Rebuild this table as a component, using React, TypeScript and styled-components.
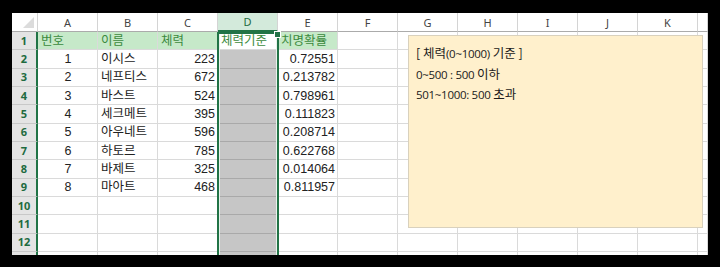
import styled, { createGlobalStyle } from 'styled-components';

const GlobalStyle = createGlobalStyle`
  html, body {
    margin: 0;
    padding: 0;
    background: #000;
  }
  body {
    font-family: "Noto Sans", "Noto Sans CJK KR", sans-serif;
  }
`;

const COLUMNS = ['A', 'B', 'C', 'D', 'E', 'F', 'G', 'H', 'I', 'J', 'K', ''];
const ROW_COUNT = 13;
const VISIBLE_ROWS = 12;

type Row = { no: string; name: string; hp: string; base: string; crit: string };

const HEAD: Row = { no: '번호', name: '이름', hp: '체력', base: '체력기준', crit: '치명확률' };

const DATA: Row[] = [
  { no: '1', name: '이시스', hp: '223', base: '', crit: '0.72551' },
  { no: '2', name: '네프티스', hp: '672', base: '', crit: '0.213782' },
  { no: '3', name: '바스트', hp: '524', base: '', crit: '0.798961' },
  { no: '4', name: '세크메트', hp: '395', base: '', crit: '0.111823' },
  { no: '5', name: '아우네트', hp: '596', base: '', crit: '0.208714' },
  { no: '6', name: '하토르', hp: '785', base: '', crit: '0.622768' },
  { no: '7', name: '바제트', hp: '325', base: '', crit: '0.014064' },
  { no: '8', name: '마아트', hp: '468', base: '', crit: '0.811957' },
];

type CellProps = {
  $align?: 'left' | 'right' | 'center';
  $variant?: 'plain' | 'title' | 'active' | 'selected';
};

const App = () => {
  const renderRow = (index: number) => {
    const rowNum = index + 1;
    const isHead = index === 0;
    const row = isHead ? HEAD : DATA[index - 1];

    return COLUMNS.map((col, c) => {
      const key = `${rowNum}-${c}`;
      let text = '';
      let align: CellProps['$align'] = 'left';
      let variant: CellProps['$variant'] = 'plain';

      if (col === 'D') variant = index === 0 ? 'active' : 'selected';
      else if (isHead && c < 5) variant = 'title';

      if (row) {
        if (col === 'A') {
          text = row.no;
          align = isHead ? 'left' : 'center';
        }
        if (col === 'B') text = row.name;
        if (col === 'C') {
          text = row.hp;
          align = isHead ? 'left' : 'right';
        }
        if (col === 'D') text = row.base;
        if (col === 'E') {
          text = row.crit;
          align = isHead ? 'left' : 'right';
        }
      }

      return (
        <Cell key={key} $align={align} $variant={variant}>
          {text}
        </Cell>
      );
    });
  };

  return (
    <>
      <GlobalStyle />
      <Frame>
        <Sheet>
          <Grid>
            <Corner />
            {COLUMNS.map((col, i) => (
              <ColHeader key={`h-${i}`} $active={col === 'D'}>
                {col}
              </ColHeader>
            ))}
            {Array.from({ length: ROW_COUNT }).map((_, i) => (
              <RowFragment key={`r-${i}`}>
                <RowHeader>{i < VISIBLE_ROWS ? i + 1 : ''}</RowHeader>
                {renderRow(i)}
              </RowFragment>
            ))}
          </Grid>

          <Selection>
            <FillHandle />
          </Selection>

          <Note>
            <NoteLine>
              [ 체력<Latin>(0~1000)</Latin> 기준 ]
            </NoteLine>
            <NoteLine>
              <Latin>0~500 : 500</Latin> 이하
            </NoteLine>
            <NoteLine>
              <Latin>501~1000: 500</Latin> 초과
            </NoteLine>
          </Note>
        </Sheet>
      </Frame>
    </>
  );
};

export default App;

const Frame = styled.div`
  width: 720px;
  height: 267px;
  padding: 13px 12px 0 12px;
  box-sizing: border-box;
  background: #000;
`;

const Sheet = styled.div`
  position: relative;
  width: 696px;
  height: 242px;
  overflow: hidden;
  background: #fff;
`;

const Grid = styled.div`
  display: grid;
  grid-template-columns: 26px repeat(11, 60px) 10px;
  grid-template-rows: 19px repeat(13, 18.33px);
`;

const RowFragment = styled.div`
  display: contents;
`;

const Corner = styled.div`
  position: relative;
  background: #fff;
  border-right: 1px solid #d4d4d4;
  border-bottom: 1px solid #ababab;
  box-sizing: border-box;

  &::after {
    content: '';
    position: absolute;
    right: 3px;
    bottom: 3px;
    width: 0;
    height: 0;
    border-left: 11px solid transparent;
    border-bottom: 11px solid #dcdcdc;
  }
`;

const ColHeader = styled.div<{ $active: boolean }>`
  display: flex;
  align-items: center;
  justify-content: center;
  box-sizing: border-box;
  border-right: 1px solid #d4d4d4;
  border-bottom: ${({ $active }) => ($active ? '2px solid #217346' : '1px solid #ababab')};
  background: ${({ $active }) => ($active ? '#d3eadb' : '#fff')};
  color: ${({ $active }) => ($active ? '#1e6b3f' : '#444')};
  font-family: "Noto Sans", sans-serif;
  font-size: 11px;
`;

const RowHeader = styled.div`
  display: flex;
  align-items: center;
  justify-content: center;
  box-sizing: border-box;
  border-bottom: 1px solid #c8c8c8;
  border-right: 2px solid #217346;
  background: #e4e4e4;
  color: #1e6b3f;
  font-family: "Noto Sans", sans-serif;
  font-size: 11px;
  font-weight: 700;
  line-height: 16px;
`;

const Cell = styled.div<CellProps>`
  display: flex;
  align-items: center;
  justify-content: ${({ $align }) =>
    $align === 'right' ? 'flex-end' : $align === 'center' ? 'center' : 'flex-start'};
  padding: 0 2px 0 3px;
  box-sizing: border-box;
  overflow: hidden;
  white-space: nowrap;
  border-right: 1px solid #dadada;
  border-bottom: 1px solid
    ${({ $variant }) => ($variant === 'selected' ? '#a9a9a9' : '#dadada')};
  background: ${({ $variant }) =>
    $variant === 'title'
      ? '#c6e9c9'
      : $variant === 'selected'
        ? '#c6c6c6'
        : '#fff'};
  color: ${({ $variant }) =>
    $variant === 'title' || $variant === 'active' ? '#3b8a3d' : '#222'};
  font-family: "Liberation Sans", "Noto Sans CJK KR", sans-serif;
  font-size: 12.5px;
  line-height: 16px;
`;

const Selection = styled.div`
  position: absolute;
  left: 205px;
  top: 19px;
  width: 62px;
  height: 240px;
  box-sizing: border-box;
  border: 2px solid #217346;
  border-bottom: none;
  box-shadow: inset 1px 0 0 #e8f3ec, inset -1px 0 0 #e8f3ec;
  pointer-events: none;
`;

const FillHandle = styled.div`
  position: absolute;
  right: -4px;
  top: -3px;
  width: 5px;
  height: 5px;
  background: #217346;
  border: 1px solid #fff;
`;

const Note = styled.div`
  position: absolute;
  left: 396px;
  top: 22px;
  width: 295px;
  height: 193px;
  box-sizing: border-box;
  padding: 8px 0 0 7px;
  display: flex;
  flex-direction: column;
  gap: 2px;
  background: #fff0cc;
  border: 1px solid #d9d1bd;
  color: #1a1a1a;
  font-family: "Noto Sans CJK KR", sans-serif;
  font-size: 12.5px;
  font-weight: 400;
`;

const NoteLine = styled.div`
  height: 18.5px;
  line-height: 18.5px;
  white-space: nowrap;
`;

const Latin = styled.span`
  font-family: "Open Sans", sans-serif;
  font-size: 11.5px;
  letter-spacing: -0.3px;
`;
